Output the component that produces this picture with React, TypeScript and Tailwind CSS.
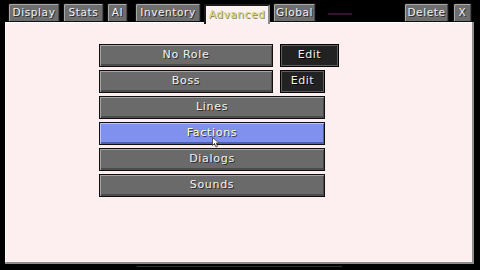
import React from "react";

const font = { fontFamily: '"DejaVu Sans", "Liberation Sans", sans-serif' };

function Tab({ label, w, selected }: { label: string; w: string; selected?: boolean }) {
  if (selected) {
    return (
      <div
        className={`${w} h-[20px] relative z-10 bg-[#fdf0f0] border-l-2 border-t-2 border-r-2 border-l-[#1a1a1a] border-t-[#1a1a1a] border-r-[#8a8a8a] rounded-t-[2px] flex items-center justify-center text-[10.5px] tracking-[0.6px] text-[#d4d47c] [text-shadow:1px_1px_0_#8a8a60]`}
      >
        {label}
      </div>
    );
  }
  return (
    <div
      className={`${w} h-[19px] bg-[#6e6e6e] border border-[#111] rounded-t-[2px] shadow-[inset_1px_1px_0_#a8a8a8,inset_-1px_0_0_#4a4a4a] flex items-center justify-center text-[10.5px] tracking-[0.6px] text-[#f0f0f0] [text-shadow:1px_1px_0_#2a2a2a]`}
    >
      {label}
    </div>
  );
}

function McButton({ label, w, hover }: { label: string; w: string; hover?: boolean }) {
  return (
    <div
      className={`${w} h-[23px] border border-[#101010] flex items-center justify-center text-[11px] tracking-[0.7px] ${
        hover
          ? "bg-[#7f90ee] shadow-[inset_1px_1px_0_#b8c4ff,inset_-1px_-2px_0_#5060b0] text-[#ffffc0] [text-shadow:1px_1px_0_#3a3a50]"
          : "bg-[#6a6a6a] shadow-[inset_1px_1px_0_#a4a4a4,inset_-1px_-2px_0_#4c4c4c] text-[#f2f2f2] [text-shadow:1px_1px_0_#2c2c2c]"
      }`}
    >
      {label}
    </div>
  );
}

function EditButton({ w }: { w: string }) {
  return (
    <div
      className={`${w} h-[23px] bg-[#222] border border-[#000] shadow-[inset_0_0_0_1px_#5e5e5e] flex items-center justify-center text-[11px] tracking-[0.5px] text-[#f0f0f0] [text-shadow:1px_1px_0_#000]`}
    >
      Edit
    </div>
  );
}

export default function App() {
  return (
    <div className="w-[480px] h-[270px] bg-black relative overflow-hidden flex flex-col" style={font}>
      {/* tabs */}
      <div className="flex items-end h-[22px] pt-[3px] pl-[8px] pr-[8px]">
        <div className="flex items-end gap-[3px]">
          <Tab label="Display" w="w-[52px]" />
          <Tab label="Stats" w="w-[41px]" />
          <Tab label="AI" w="w-[21px]" />
          <div className="w-[1px]" />
          <Tab label="Inventory" w="w-[66px]" />
          <Tab label="Advanced" w="w-[66px] mb-[-2px]" selected />
          <Tab label="Global" w="w-[43px]" />
        </div>
        <div className="flex-1 flex items-start h-full">
          <div className="ml-[12px] mt-[10px] w-[24px] h-[2px] bg-[#3a1030]" />
        </div>
        <div className="flex items-end gap-[4px]">
          <Tab label="Delete" w="w-[45px]" />
          <Tab label="X" w="w-[19px]" />
        </div>
      </div>
      {/* panel */}
      <div className="ml-[5px] w-[469px] h-[242px] bg-[#fdefef] border-r-2 border-b-2 border-r-[#8c8c8c] border-b-[#8c8c8c] shadow-[inset_1px_1px_0_#ffffff] pt-[22px] pl-[94px]">
        <div className="flex flex-col gap-[3px]">
          <div className="flex gap-[7px]">
            <McButton label="No Role" w="w-[174px]" />
            <EditButton w="w-[59px]" />
          </div>
          <div className="flex gap-[7px]">
            <McButton label="Boss" w="w-[174px]" />
            <EditButton w="w-[45px]" />
          </div>
          <McButton label="Lines" w="w-[226px]" />
          <div className="relative w-[226px]">
            <McButton label="Factions" w="w-[226px]" hover />
            <svg className="absolute left-[113px] top-[15px]" width="9" height="11" viewBox="0 0 9 11">
              <path d="M0.5 0.5 L0.5 8.5 L2.5 6.5 L4 10 L5.5 9.3 L4.2 6 L7 6 Z" fill="#ffffff" stroke="#333" strokeWidth="0.8" />
            </svg>
          </div>
          <McButton label="Dialogs" w="w-[226px]" />
          <McButton label="Sounds" w="w-[226px]" />
        </div>
      </div>
      <div className="ml-[137px] mt-[2px] w-[205px] h-[1px] bg-[#333]" />
    </div>
  );
}
